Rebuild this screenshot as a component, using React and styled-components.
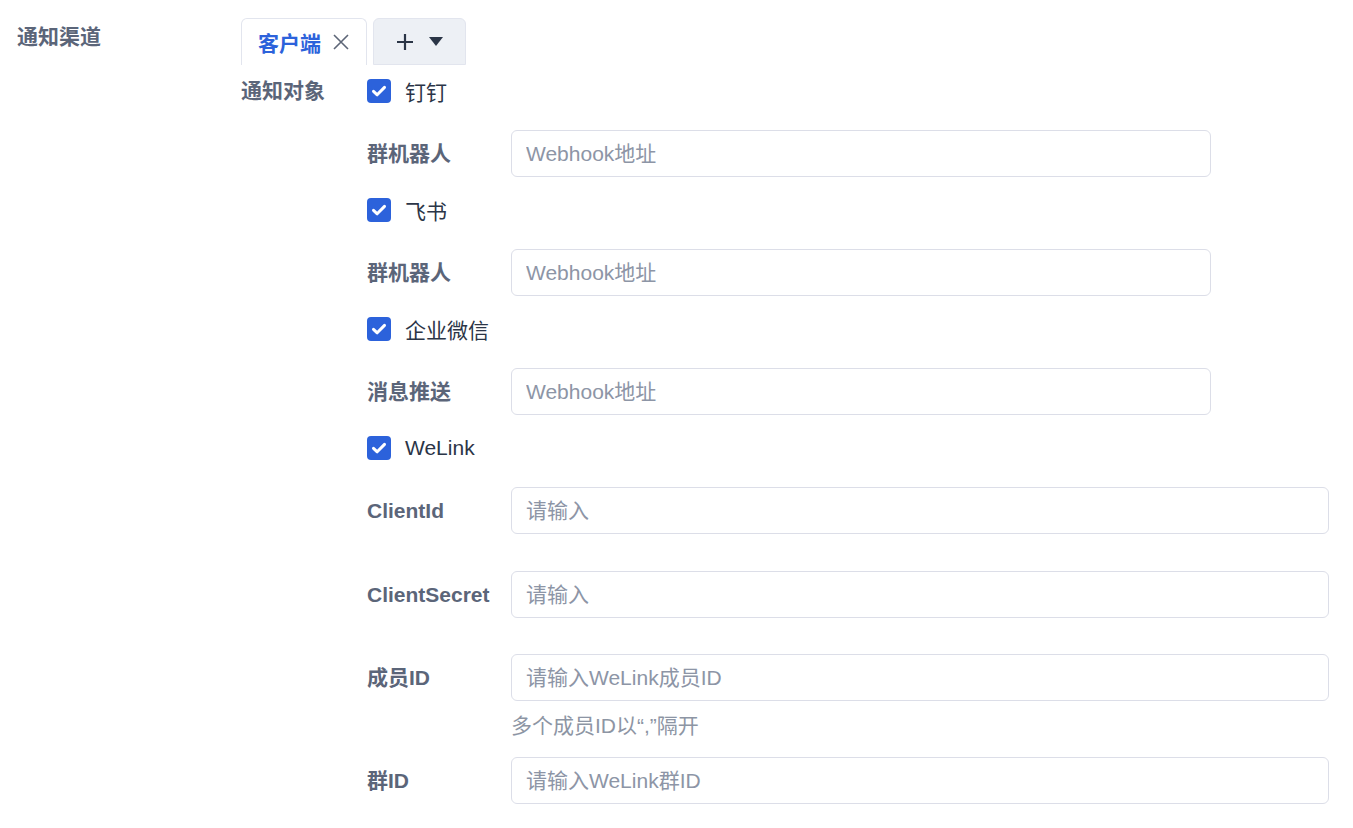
import styled, { createGlobalStyle } from "styled-components";

const GlobalStyle = createGlobalStyle`
  body {
    margin: 0;
    background: #fff;
    font-family: "Liberation Sans", "Noto Sans CJK SC", sans-serif;
  }
  * { box-sizing: border-box; }
`;

const Page = styled.div`
  padding: 18px 24px 24px 17px;
  display: flex;
`;

const SideLabel = styled.div`
  width: 224px;
  flex-shrink: 0;
  font-size: 21px;
  font-weight: 700;
  line-height: 38px;
  color: #5b6579;
`;

const Main = styled.div`
  flex: 1;
  min-width: 0;
`;

const TabBar = styled.div`
  display: flex;
  gap: 6px;
  height: 47px;
`;

const Tab = styled.div`
  display: flex;
  align-items: center;
  gap: ${(p) => (p.$active ? "11px" : "15px")};
  padding: ${(p) => (p.$active ? "0 16px 0 16px" : "0 22px")};
  border: 1px solid #e2e5ee;
  border-bottom: ${(p) => (p.$active ? "none" : "1px solid #e2e5ee")};
  border-radius: 6px 6px 0 0;
  background: ${(p) => (p.$active ? "#fff" : "#edf0f5")};
  color: #2c62db;
  font-size: 21px;
  font-weight: 700;
`;

const Form = styled.div`
  display: flex;
  margin-top: 2px;
`;

const SubLabel = styled(SideLabel)`
  width: 126px;
  line-height: 48px;
`;

const Fields = styled.div`
  flex: 1;
  min-width: 0;
`;

const CheckRow = styled.label`
  display: flex;
  align-items: center;
  gap: 14px;
  height: 48px;
  margin-bottom: 15px;
  font-size: 21px;
  color: #2b3547;
`;

const Box = styled.span`
  width: 24px;
  height: 24px;
  border-radius: 4px;
  background: #2c62db;
  display: flex;
  align-items: center;
  justify-content: center;
`;

const FieldRow = styled.div`
  display: flex;
  align-items: flex-start;
  margin-bottom: ${(p) => p.$gap || 9}px;
`;

const FieldLabel = styled.div`
  width: 144px;
  flex-shrink: 0;
  font-size: 21px;
  font-weight: 700;
  line-height: 47px;
  color: #5b6579;
`;

const FieldBody = styled.div`
  flex: 1;
  min-width: 0;
`;

const Input = styled.input`
  display: block;
  width: ${(p) => (p.$short ? "700px" : "100%")};
  height: 47px;
  padding: 0 14px;
  border: 1px solid #dcdee8;
  border-radius: 6px;
  font-family: inherit;
  font-size: 21px;
  color: #2b3547;
  outline: none;
  &::placeholder {
    color: #8d95a6;
  }
`;

const Hint = styled.div`
  padding-top: 10px;
  line-height: 30px;
  font-size: 21px;
  color: #8d95a4;
`;

const Check = () => (
  <Box>
    <svg width="24" height="24" viewBox="0 0 24 24">
      <path d="M6.5 12.3l3.7 3.5L17.5 8.4" fill="none" stroke="#fff" strokeWidth="3" strokeLinecap="round" strokeLinejoin="round" />
    </svg>
  </Box>
);

function Channel({ name, label, placeholder }) {
  return (
    <>
      <CheckRow>
        <Check />
        {name}
      </CheckRow>
      <FieldRow>
        <FieldLabel>{label}</FieldLabel>
        <FieldBody>
          <Input $short placeholder={placeholder} />
        </FieldBody>
      </FieldRow>
    </>
  );
}

export default function App() {
  return (
    <>
      <GlobalStyle />
      <Page>
        <SideLabel>通知渠道</SideLabel>
        <Main>
          <TabBar>
            <Tab $active>
              客户端
              <svg width="18" height="18" viewBox="0 0 18 18">
                <path d="M2 2l14 14M16 2L2 16" stroke="#5d6677" strokeWidth="1.6" />
              </svg>
            </Tab>
            <Tab>
              <svg width="18" height="18" viewBox="0 0 18 18">
                <path d="M9 1v16M1 9h16" stroke="#2b3547" strokeWidth="2.2" />
              </svg>
              <svg width="14" height="9" viewBox="0 0 14 9">
                <path d="M0 0h14L7 9z" fill="#2b3547" />
              </svg>
            </Tab>
          </TabBar>
          <Form>
            <SubLabel>通知对象</SubLabel>
            <Fields>
              <Channel name="钉钉" label="群机器人" placeholder="Webhook地址" />
              <Channel name="飞书" label="群机器人" placeholder="Webhook地址" />
              <Channel name="企业微信" label="消息推送" placeholder="Webhook地址" />
              <CheckRow>
                <Check />
                WeLink
              </CheckRow>
              <FieldRow $gap={37}>
                <FieldLabel>ClientId</FieldLabel>
                <FieldBody>
                  <Input placeholder="请输入" />
                </FieldBody>
              </FieldRow>
              <FieldRow $gap={36}>
                <FieldLabel>ClientSecret</FieldLabel>
                <FieldBody>
                  <Input placeholder="请输入" />
                </FieldBody>
              </FieldRow>
              <FieldRow $gap={16}>
                <FieldLabel>成员ID</FieldLabel>
                <FieldBody>
                  <Input placeholder="请输入WeLink成员ID" />
                  <Hint>多个成员ID以“,”隔开</Hint>
                </FieldBody>
              </FieldRow>
              <FieldRow>
                <FieldLabel>群ID</FieldLabel>
                <FieldBody>
                  <Input placeholder="请输入WeLink群ID" />
                </FieldBody>
              </FieldRow>
            </Fields>
          </Form>
        </Main>
      </Page>
    </>
  );
}
